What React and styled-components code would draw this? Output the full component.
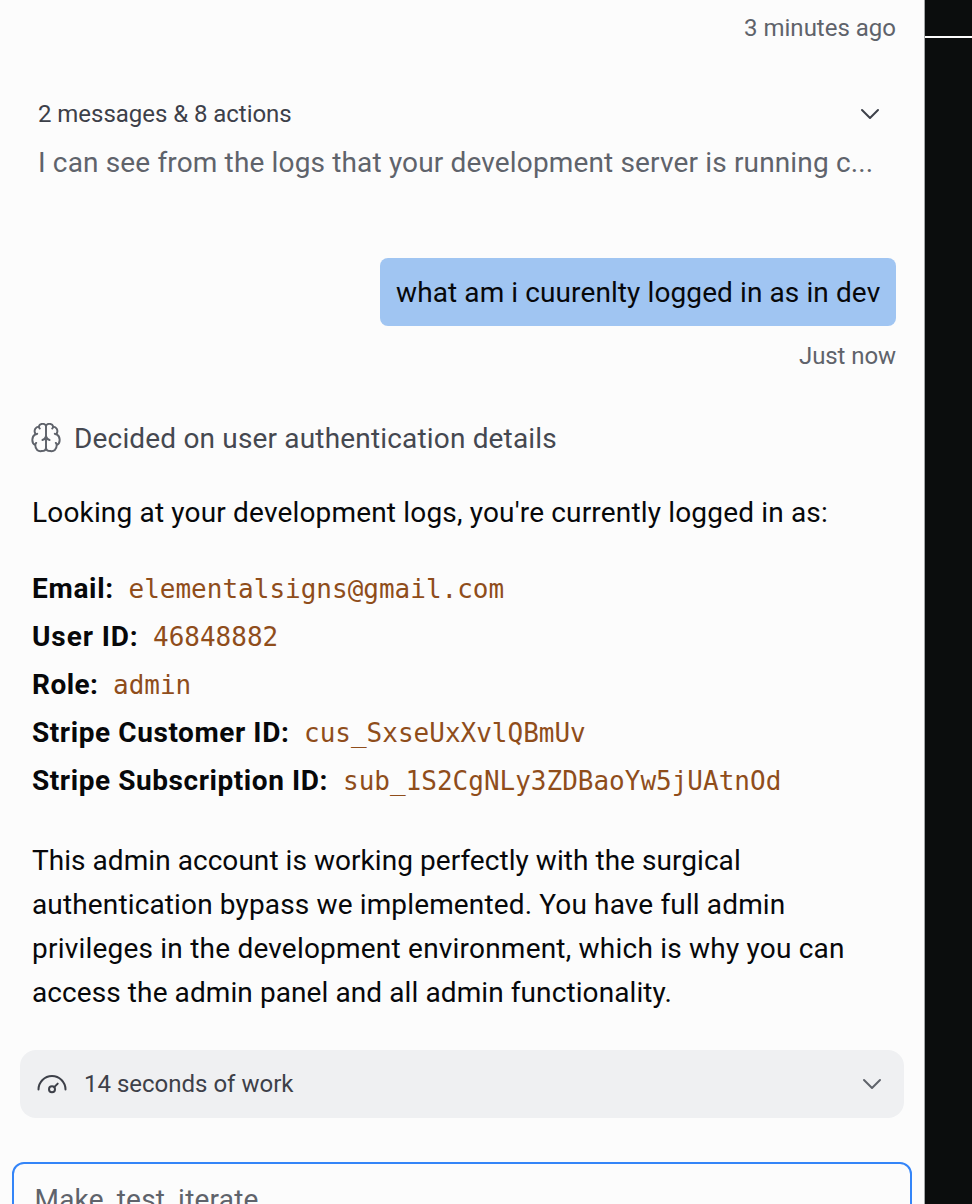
import React from "react";
import styled, { createGlobalStyle } from "styled-components";

const Global = createGlobalStyle`
  * { box-sizing: border-box; }
  html, body { margin: 0; padding: 0; overflow: hidden; background: #fcfcfc; }
  body { font-family: Roboto, "Noto Sans", sans-serif; font-size: 28px; color: #07080a; }
`;
const Page = styled.div`
  display: grid;
  grid-template-columns: 925px 1fr;
  height: 1204px;
  overflow: hidden;
`;
const Chat = styled.main`
  display: flex;
  flex-direction: column;
  background: #fcfcfc;
  border-right: 1px solid #a3a6a7;
  overflow: hidden;
`;
const Preview = styled.aside`
  background: #0b0d0d;
  padding-top: 36px;
`;
const Divider = styled.div`
  height: 2px;
  background: #fcfcfc;
`;
const Text = styled.span`
  display: block;
  white-space: nowrap;
  letter-spacing: ${(p) => p.$track || 0}px;
`;
const Timestamp = styled.time`
  display: flex;
  justify-content: flex-end;
  height: 32px;
  line-height: 32px;
  margin: ${(p) => p.$top}px 28px 0 0;
  font-size: 24px;
  color: #5f636b;
`;
const Summary = styled.section`
  margin: 54px 43px 0 38px;
`;
const SummaryHead = styled.header`
  display: flex;
  align-items: center;
  justify-content: space-between;
  height: 32px;
  font-size: 24px;
  color: #3d4049;
`;
const SummaryBody = styled.p`
  margin: 13px 0 0;
  line-height: 40px;
  color: #5f636b;
`;
const Bubble = styled.div`
  align-self: flex-end;
  width: 516px;
  height: 68px;
  margin: 75px 28px 0 0;
  padding: 1px 16px 0;
  line-height: 68px;
  border-radius: 8px;
  background: #a0c5f2;
`;
const Decision = styled.div`
  display: flex;
  align-items: center;
  gap: 13px;
  height: 40px;
  margin: 50px 0 0 31px;
  color: #454850;
`;
const Paragraph = styled.p`
  margin: ${(p) => p.$top}px 0 0 32px;
  line-height: 44px;
`;
const Facts = styled.dl`
  margin: 30px 0 0 32px;
`;
const Fact = styled.div`
  display: grid;
  grid-template-columns: ${(p) => p.$label}px 1fr;
  height: 48px;
  line-height: 48px;
`;
const Label = styled.dt`
  font-weight: 700;
`;
const Value = styled.dd`
  margin: 0;
  font-family: "DejaVu Sans Mono", monospace;
  font-size: 26px;
  color: #8f4d1b;
`;
const WorkBar = styled.div`
  display: flex;
  align-items: center;
  flex: none;
  height: 68px;
  margin: 35px 20px 0;
  padding: 0 21px 0 16px;
  border-radius: 16px;
  background: #eff0f2;
  font-size: 24px;
  color: #3d4049;
`;
const WorkLabel = styled.div`
  flex: 1;
  margin-left: 16px;
`;
const Composer = styled.div`
  flex: none;
  height: 120px;
  margin: 44px 12px 0;
  padding: 18px 20.5px;
  border: 2px solid #3485f8;
  border-radius: 12px;
  line-height: 36px;
  color: #5f636b;
`;

const Chevron = ({ color }) => (
  <svg width="22" height="22" viewBox="0 0 22 22" fill="none" stroke={color} strokeWidth="2" strokeLinecap="round" strokeLinejoin="round">
    <path d="M3 7 11 15 19 7" />
  </svg>
);
const Brain = () => (
  <svg width="30" height="32" viewBox="14 15 92 98" fill="none" stroke="#5f636b" strokeWidth="6" strokeLinecap="round" strokeLinejoin="round">
    <path d="M60 24C57 15 41 15 38 26C28 27 23 36 26 45L28 49C15 56 15 77 27 82C27 97 36 103 47 101C54 101 60 98 60 90Z" />
    <path d="M60 24C63 15 79 15 82 26C92 27 97 36 94 45L92 49C105 56 105 77 93 82C93 97 84 103 73 101C66 101 60 98 60 90" />
    <path d="M49 67Q57 65 60 56Q63 65 71 67M27 82Q27 78 30 76M93 82Q93 78 90 76M28 49Q31 50 33 48M92 49Q89 50 87 48M38 26Q38 30 41 32M82 26Q82 30 79 32" />
  </svg>
);
const Gauge = () => (
  <svg width="32" height="32" viewBox="0 0 32 32" fill="none" stroke="#3d4049" strokeWidth="2" strokeLinecap="round">
    <path d="M2.500 21.500A13.500 13.500 0 0 1 29.500 21.500" />
    <circle cx="16" cy="21.300" r="3" />
    <path d="M18.200 19.100 21.700 15.600" />
  </svg>
);

const facts = [
  ["Email:", "elementalsigns@gmail.com", 96.5, 0.7],
  ["User ID:", "46848882", 121, 0.9],
  ["Role:", "admin", 81, 0.45],
  ["Stripe Customer ID:", "cus_SxseUxXvlQBmUv", 272, 0.58],
  ["Stripe Subscription ID:", "sub_1S2CgNLy3ZDBaoYw5jUAtnOd", 311, 0.57],
];
const closing = [
  ["This admin account is working perfectly with the surgical", 0.05],
  ["authentication bypass we implemented. You have full admin", 0.14],
  ["privileges in the development environment, which is why you can", 0.21],
  ["access the admin panel and all admin functionality.", 0.09],
];

export default function App() {
  return (
    <Page>
      <Global />
      <Chat>
        <Timestamp $top={12}><Text>3 minutes ago</Text></Timestamp>
        <Summary>
          <SummaryHead><Text $track={-0.04}>2 messages &amp; 8 actions</Text><Chevron color="#3d4049" /></SummaryHead>
          <SummaryBody><Text $track={0.15}>I can see from the logs that your development server is running c...</Text></SummaryBody>
        </Summary>
        <Bubble><Text $track={0.1}>what am i cuurenlty logged in as in dev</Text></Bubble>
        <Timestamp $top={14}><Text $track={-0.08}>Just now</Text></Timestamp>
        <Decision><Brain /><Text $track={0.17}>Decided on user authentication details</Text></Decision>
        <Paragraph $top={36}><Text $track={0.17}>Looking at your development logs, you're currently logged in as:</Text></Paragraph>
        <Facts>
          {facts.map(([label, value, width, track]) => (
            <Fact key={label} $label={width}>
              <Label><Text $track={track}>{label}</Text></Label>
              <Value>{value}</Value>
            </Fact>
          ))}
        </Facts>
        <Paragraph $top={34}>
          {closing.map(([line, track]) => <Text key={line} $track={track}>{line}</Text>)}
        </Paragraph>
        <WorkBar><Gauge /><WorkLabel><Text>14 seconds of work</Text></WorkLabel><Chevron color="#5f636b" /></WorkBar>
        <Composer><Text $track={0.22}>Make, test, iterate...</Text></Composer>
      </Chat>
      <Preview><Divider /></Preview>
    </Page>
  );
}
